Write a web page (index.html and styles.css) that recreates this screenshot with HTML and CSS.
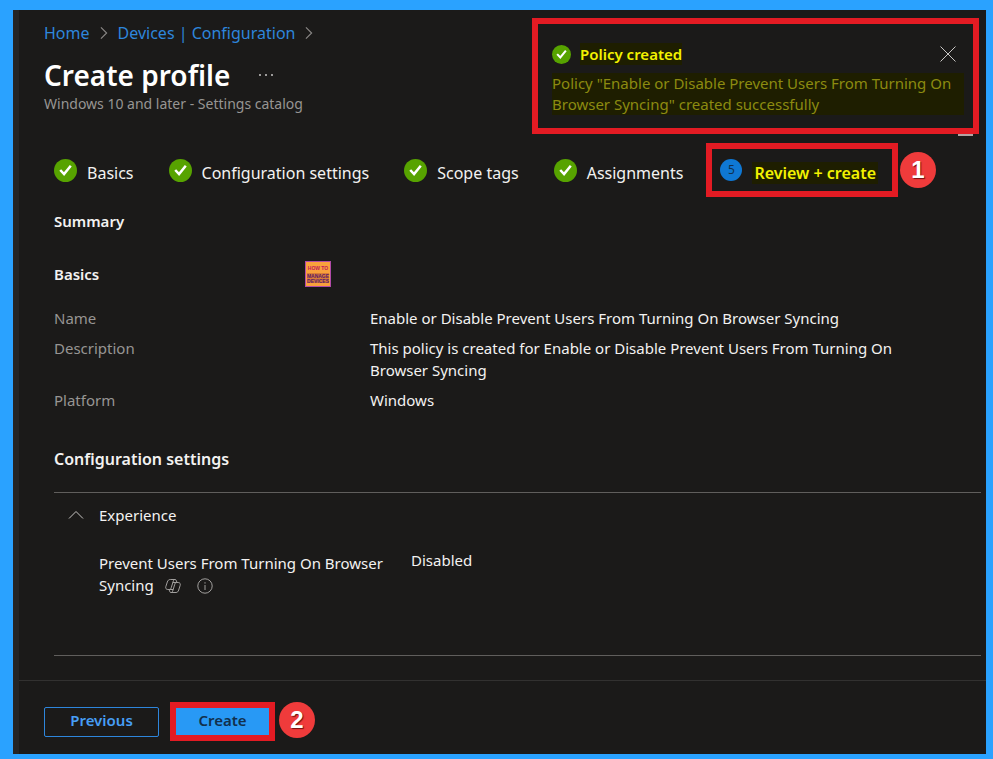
FILE: index.html
```html
<!DOCTYPE html>
<html lang="en">
<head>
  <meta charset="UTF-8">
  <meta name="viewport" content="width=device-width, initial-scale=1.0">
  <title>Create profile</title>
  <link rel="stylesheet" href="styles.css">
</head>
<body>

  <!-- Shared icons -->
  <svg class="sprite" aria-hidden="true">
    <symbol id="icon-check" viewBox="0 0 24 24">
      <circle cx="12" cy="12" r="12" fill="#57a300"/>
      <path d="M6.500 11.500l4 4.300 7-8.800" fill="none" stroke="#fff" stroke-width="2.600"/>
    </symbol>
    <symbol id="icon-chevron" viewBox="0 0 10 16">
      <path d="M1.500 1.500L8 8l-6.500 6.500" fill="none" stroke="#8a8886" stroke-width="1.300"/>
    </symbol>
  </svg>

  <div class="portal">
    <header class="page-header">
      <nav class="breadcrumb" aria-label="Breadcrumb">
        <a href="#">Home</a>
        <svg class="chevron"><use href="#icon-chevron"/></svg>
        <a href="#">Devices | Configuration</a>
        <svg class="chevron"><use href="#icon-chevron"/></svg>
      </nav>
      <div class="title-row">
        <h1>Create profile</h1>
        <button class="more" aria-label="More">
          <svg viewBox="0 0 16 4"><circle cx="2" cy="2" r="1"/><circle cx="8" cy="2" r="1"/><circle cx="14" cy="2" r="1"/></svg>
        </button>
      </div>
      <p class="subtitle">Windows 10 and later - Settings catalog</p>
    </header>

    <!-- Notification -->
    <div class="toast callout" role="status">
      <div class="toast-head">
        <svg class="toast-icon"><use href="#icon-check"/></svg>
        <strong class="marked">Policy created</strong>
        <button class="close" aria-label="Close">
          <svg viewBox="0 0 16 16"><path d="M.5.5l15 15M15.500.500l-15 15"/></svg>
        </button>
      </div>
      <p>Policy "Enable or Disable Prevent Users From Turning On Browser Syncing" created successfully</p>
    </div>

    <main>
      <!-- Wizard steps -->
      <div class="steps">
        <a class="step" href="#"><svg class="step-icon"><use href="#icon-check"/></svg><span class="step-label">Basics</span></a>
        <a class="step" href="#"><svg class="step-icon"><use href="#icon-check"/></svg><span class="step-label">Configuration settings</span></a>
        <a class="step" href="#"><svg class="step-icon"><use href="#icon-check"/></svg><span class="step-label">Scope tags</span></a>
        <a class="step" href="#"><svg class="step-icon"><use href="#icon-check"/></svg><span class="step-label">Assignments</span></a>
        <div class="marker-group">
          <a class="step current callout" href="#"><span class="step-number">5</span><span class="step-label marked">Review + create</span></a>
          <span class="marker">1</span>
        </div>
      </div>

      <h2 class="summary-title">Summary</h2>

      <div class="section-head">
        <h2>Basics</h2>
        <svg class="logo" viewBox="0 0 26 26">
          <rect x=".5" y=".5" width="25" height="25" fill="#f9a13c" stroke="#b04aa8"/>
          <rect x="2" y="12" width="22" height="10" fill="#a8452f" opacity=".4"/>
          <text x="13" y="9" class="logo-small">HOW TO</text>
          <text x="13" y="17" class="logo-text">MANAGE</text>
          <text x="13" y="22" class="logo-text">DEVICES</text>
        </svg>
      </div>

      <dl class="details">
        <dt>Name</dt>
        <dd>Enable or Disable Prevent Users From Turning On Browser Syncing</dd>
        <dt>Description</dt>
        <dd>This policy is created for Enable or Disable Prevent Users From Turning On Browser Syncing</dd>
        <dt>Platform</dt>
        <dd>Windows</dd>
      </dl>

      <h2 class="config-title">Configuration settings</h2>

      <section class="config">
        <button class="group-toggle" aria-expanded="true">
          <svg viewBox="0 0 16 10"><path d="M1 8.500l7-7 7 7"/></svg>
          <span>Experience</span>
        </button>
        <div class="setting">
          <div class="setting-name">
            Prevent Users From Turning On Browser Syncing
            <svg class="copilot" viewBox="0 0 16 16">
              <path d="M5.300 1.500H10c.8 0 1.200.5 1.400 1.200l.5 1.800h1.300c1.600 0 2.500 1.200 2 2.800l-1.500 4.700c-.5 1.600-1.300 2.500-2.700 2.500H6c-.8 0-1.200-.5-1.400-1.200l-.5-1.800H2.800c-1.600 0-2.500-1.200-2-2.800L2.300 4c.5-1.600 1.500-2.500 3-2.500zM4.100 11.500c1.300 0 1.800-.7 2.100-1.700L8.300 3c.3-.9.800-1.500 1.700-1.500M11.900 4.500c-1.300 0-1.800.7-2.100 1.700L7.700 13c-.3.900-.8 1.500-1.700 1.500M7.800 4.500h4M4.200 11.500h4"/>
            </svg>
            <svg class="info" viewBox="0 0 16 16">
              <circle cx="8" cy="8" r="7.200"/><path d="M8 7v5M8 4.200v1.400"/>
            </svg>
          </div>
          <div class="setting-value">Disabled</div>
        </div>
      </section>
    </main>

    <footer class="actions">
      <button class="btn">Previous</button>
      <div class="marker-group">
        <div class="callout"><button class="btn primary">Create</button></div>
        <span class="marker">2</span>
      </div>
    </footer>
  </div>

</body>
</html>
```

FILE: styles.css
```css
/* Base */
* { margin: 0; padding: 0; box-sizing: border-box; }
body { font-family: "Noto Sans", "Open Sans", sans-serif; font-size: 15px; line-height: 22px; color: #f3f2f1; background: #1b1a19; }
button { font: inherit; color: inherit; background: none; border: none; cursor: pointer; }
a { color: inherit; text-decoration: none; }
h2 { font-size: 15px; font-weight: 600; }
.sprite { position: absolute; width: 0; height: 0; }

.portal {
  position: relative;
  display: flex;
  flex-direction: column;
  min-height: 100vh;
  border: solid #2aa2ff;
  border-width: 10px 7px 5px 13px;
}
.portal::before { content: ""; position: absolute; top: 0; bottom: 0; left: 0; width: 6px; background: #252525; }

/* Header */
.page-header { padding: 12px 31px 0; }
.breadcrumb { display: flex; align-items: center; gap: 9px; font-size: 16px; color: #2e86dc; }
.chevron { width: 10px; height: 14px; }
.title-row { display: flex; align-items: center; gap: 28px; margin-top: 13px; }
h1 { font-size: 28px; font-weight: 600; line-height: 36px; color: #fff; }
.more svg { display: block; width: 16px; height: 4px; fill: #c8c6c4; }
.subtitle { font-size: 14px; color: #979593; }

/* Annotations */
.callout { border: 6px solid #e31b23; }
.marked { color: #f2f200; background: #1e1e00; }
.marker-group { display: flex; align-items: center; gap: 2px; }
.marker {
  width: 36px;
  height: 36px;
  border-radius: 50%;
  background: #ef3b3b;
  color: #fff;
  font: bold 24px/36px "Liberation Sans", sans-serif;
  text-align: center;
  text-shadow: 1px 1px 1px #701010;
}

/* Notification */
.toast { position: absolute; top: 8px; right: 7px; width: 447px; height: 116px; padding: 19px 9px 0 14px; background: #1b1a19; }
.toast::after { content: ""; position: absolute; right: 0; bottom: -8px; width: 15px; height: 2px; background: #b3a3a3; }
.toast-head { display: flex; align-items: center; gap: 9px; margin-bottom: 8px; }
.toast-icon { width: 19px; height: 19px; }
.toast-head .marked { font-weight: 600; }
.toast p { line-height: 21px; color: #8c8b10; background: #1e1e00; }
.close { margin-left: auto; margin-right: 8px; }
.close svg { display: block; width: 16px; height: 16px; stroke: #c8c6c4; fill: none; }

/* Steps */
main { padding: 28px 5px 0 41px; }
.steps { display: flex; align-items: center; gap: 35px; font-size: 16px; white-space: nowrap; }
.step { display: flex; align-items: center; gap: 10px; }
.step-icon { width: 23px; height: 23px; }
.step-label { margin-top: 5px; }
.steps .marker-group { margin-left: -12px; }
.current { height: 54px; padding: 0 14px 0 8px; font-weight: 600; }
.step-number { width: 22px; height: 22px; border-radius: 50%; background: #0f78d4; color: #10304f; font-size: 12px; font-weight: 400; text-align: center; }
.current .step-label { padding: 0 2px; }

/* Summary */
.summary-title { margin-top: 13px; }
.section-head { display: grid; grid-template-columns: 251px 1fr; align-items: center; margin-top: 29px; }
.logo { width: 26px; height: 26px; }
.logo text { font-family: "Liberation Sans", sans-serif; font-weight: bold; text-anchor: middle; }
.logo .logo-small { font-size: 5px; fill: #c2185b; }
.logo .logo-text { font-size: 5px; fill: #5b1a6b; }
.details { display: grid; grid-template-columns: 316px minmax(0, 550px); row-gap: 8px; margin-top: 20px; }
.details dt { color: #979593; }

/* Configuration settings */
.config-title { margin-top: 37px; font-size: 16px; }
.config { margin-top: 22px; padding: 11px 14px 59px; border: solid #605e5c; border-width: 1px 0; }
.group-toggle { display: flex; align-items: center; gap: 15px; }
.group-toggle svg { width: 16px; height: 10px; fill: none; stroke: #c8c6c4; }
.setting { display: grid; grid-template-columns: 290px 1fr; gap: 22px; margin: 23px 0 0 31px; }
.setting-name { padding-top: 3px; }
.setting-name svg { width: 16px; height: 16px; margin: 0 5px 0 7px; vertical-align: -3px; fill: none; stroke: #a19f9d; }

/* Footer */
.actions { display: flex; align-items: center; gap: 11px; margin: auto 0 0 6px; padding: 21px 25px 13px; border-top: 1px solid #323130; }
.btn { width: 115px; height: 30px; padding-bottom: 3px; border: 1px solid #2e86dc; border-radius: 2px; color: #479ef5; font-weight: 600; line-height: 24px; }
.btn.primary { display: block; width: 93px; height: 27px; border: none; border-radius: 0; background: #2899f5; color: #12304d; }
.actions .marker-group { align-items: flex-start; gap: 4px; }
```
